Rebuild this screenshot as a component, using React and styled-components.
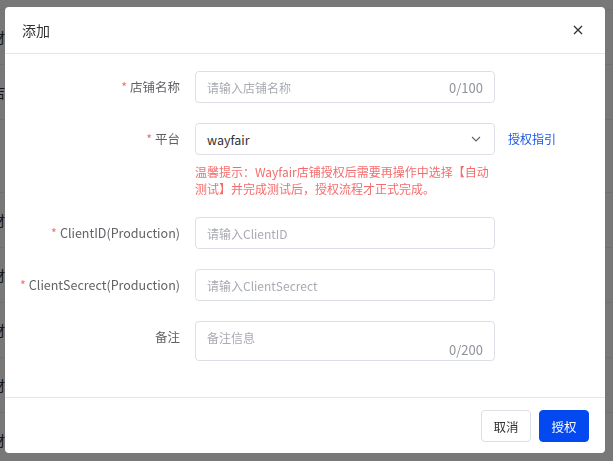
import React from "react";
import styled, { createGlobalStyle } from "styled-components";

const GlobalStyle = createGlobalStyle`
  html, body {
    margin: 0;
    padding: 0;
    height: 100%;
  }
  body {
    font-family: "Noto Sans CJK SC", "Noto Sans", sans-serif;
    background: #ffffff;
  }
  * {
    box-sizing: border-box;
  }
`;

// page behind the mask
const Page = styled.div`
  height: 461px;
  overflow: hidden;
  background: #ffffff;
`;

const BgRow = styled.div`
  height: ${(p) => p.$h}px;
  border-bottom: 1px solid #ebeef5;
  display: flex;
  align-items: center;
  font-size: 14px;
  color: #303133;
  text-indent: -9px;
  white-space: nowrap;
  overflow: hidden;
`;

const Mask = styled.div`
  position: fixed;
  inset: 0;
  background: rgba(0, 0, 0, 0.53);
  display: flex;
  align-items: flex-start;
  padding: 7px 0 0 5px;
`;

const Dialog = styled.div`
  width: 600px;
  background: #ffffff;
  border-radius: 4px;
  overflow: hidden;
`;

// header
const Header = styled.div`
  height: 47px;
  border-bottom: 1px solid #e4e7ed;
  display: flex;
  align-items: center;
  justify-content: space-between;
  padding: 0 20px 0 17px;
`;

const Title = styled.span`
  font-size: 14px;
  color: #303133;
`;

const Close = styled.button`
  border: none;
  background: none;
  padding: 0;
  width: 14px;
  height: 14px;
  display: flex;
  align-items: center;
  justify-content: center;
  cursor: pointer;
  color: #303133;
`;

// body
const Body = styled.div`
  padding: 17px 20px 36px 0;
  display: flex;
  flex-direction: column;
  gap: 20px;
`;

const Row = styled.div`
  display: flex;
  align-items: flex-start;
`;

const Label = styled.label`
  width: 190px;
  flex-shrink: 0;
  padding-right: 15px;
  text-align: right;
  font-size: 12.5px;
  line-height: 32px;
  color: #606266;
  white-space: nowrap;
`;

const Star = styled.span`
  color: #f56c6c;
  margin-right: 3px;
`;

const Control = styled.div`
  width: 300px;
  flex-shrink: 0;
`;

const Field = styled.div`
  height: ${(p) => (p.$multi ? 40 : 32)}px;
  border: 1px solid #dcdfe6;
  border-radius: 4px;
  display: flex;
  align-items: ${(p) => (p.$multi ? "flex-start" : "center")};
  padding: 0 11px;
  position: relative;
  background: #ffffff;
`;

const TextInput = styled.input`
  flex: 1;
  min-width: 0;
  border: none;
  outline: none;
  padding: 0;
  font-family: inherit;
  font-size: 12px;
  color: #303133;
  background: transparent;
  &::placeholder {
    color: #a8abb2;
  }
`;

const TextArea = styled.textarea`
  flex: 1;
  height: 100%;
  border: none;
  outline: none;
  resize: none;
  padding: 7px 0 0;
  font-family: inherit;
  font-size: 12px;
  line-height: 18px;
  color: #303133;
  background: transparent;
  &::placeholder {
    color: #a8abb2;
  }
`;

const Count = styled.span`
  font-size: 13px;
  color: #909399;
  ${(p) =>
    p.$bottom &&
    `
    position: absolute;
    right: 11px;
    bottom: 3px;
    line-height: 14px;
  `}
`;

const SelectValue = styled.span`
  flex: 1;
  font-size: 12.5px;
  color: #303133;
`;

const Arrow = styled.span`
  display: flex;
  color: #606266;
  margin-right: 2px;
`;

const Tip = styled.div`
  margin-top: 8px;
  font-size: 12px;
  line-height: 17px;
  color: #f56c6c;
  white-space: nowrap;
`;

const Link = styled.a`
  margin-left: 13px;
  font-size: 12px;
  line-height: 32px;
  color: #1a55e8;
  text-decoration: none;
  white-space: nowrap;
`;

// footer
const Footer = styled.div`
  border-top: 1px solid #e4e7ed;
  padding: 12px 16px 11px;
  display: flex;
  justify-content: flex-end;
  gap: 8px;
`;

const Button = styled.button`
  width: 50px;
  height: 32px;
  border-radius: 4px;
  font-family: inherit;
  font-size: 12.5px;
  cursor: pointer;
  border: 1px solid ${(p) => (p.$primary ? "#0349ef" : "#dcdfe6")};
  background: ${(p) => (p.$primary ? "#0349ef" : "#ffffff")};
  color: ${(p) => (p.$primary ? "#ffffff" : "#303133")};
`;

const bgRows = [
  { h: 10, t: "" },
  { h: 55, t: "材料" },
  { h: 55, t: "店铺" },
  { h: 73, t: "" },
  { h: 55, t: "材料" },
  { h: 55, t: "材料" },
  { h: 55, t: "材料" },
  { h: 55, t: "材料" },
  { h: 55, t: "材料" },
];

const CloseIcon = () => (
  <svg width="10" height="10" viewBox="0 0 10 10">
    <path d="M1 1L9 9M9 1L1 9" stroke="currentColor" strokeWidth="1.3" />
  </svg>
);

const ChevronIcon = () => (
  <svg width="10" height="6" viewBox="0 0 10 6">
    <path d="M1 1L5 5L9 1" fill="none" stroke="currentColor" strokeWidth="1.1" />
  </svg>
);

const App = () => {
  return (
    <>
      <GlobalStyle />
      <Page>
        {bgRows.map((r, i) => (
          <BgRow key={i} $h={r.h}>
            {r.t}
          </BgRow>
        ))}
      </Page>
      <Mask>
        <Dialog>
          <Header>
            <Title>添加</Title>
            <Close aria-label="关闭">
              <CloseIcon />
            </Close>
          </Header>
          <Body>
            <Row>
              <Label>
                <Star>*</Star>店铺名称
              </Label>
              <Control>
                <Field>
                  <TextInput placeholder="请输入店铺名称" />
                  <Count>0/100</Count>
                </Field>
              </Control>
            </Row>
            <Row>
              <Label>
                <Star>*</Star>平台
              </Label>
              <Control>
                <Field>
                  <SelectValue>wayfair</SelectValue>
                  <Arrow>
                    <ChevronIcon />
                  </Arrow>
                </Field>
                <Tip>
                  温馨提示：Wayfair店铺授权后需要再操作中选择【自动
                  <br />
                  测试】并完成测试后，授权流程才正式完成。
                </Tip>
              </Control>
              <Link href="#">授权指引</Link>
            </Row>
            <Row>
              <Label>
                <Star>*</Star>ClientID(Production)
              </Label>
              <Control>
                <Field>
                  <TextInput placeholder="请输入ClientID" />
                </Field>
              </Control>
            </Row>
            <Row>
              <Label>
                <Star>*</Star>ClientSecrect(Production)
              </Label>
              <Control>
                <Field>
                  <TextInput placeholder="请输入ClientSecrect" />
                </Field>
              </Control>
            </Row>
            <Row>
              <Label>备注</Label>
              <Control>
                <Field $multi>
                  <TextArea placeholder="备注信息" />
                  <Count $bottom>0/200</Count>
                </Field>
              </Control>
            </Row>
          </Body>
          <Footer>
            <Button>取消</Button>
            <Button $primary>授权</Button>
          </Footer>
        </Dialog>
      </Mask>
    </>
  );
};

export default App;
